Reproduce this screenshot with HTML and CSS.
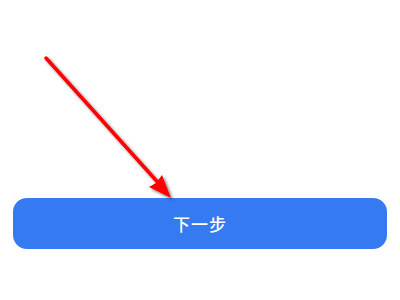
FILE: index.html
```html
<!DOCTYPE html>
<html lang="zh-CN">
<head>
  <meta charset="UTF-8"/>
  <meta name="viewport" content="width=device-width, initial-scale=1.0"/>
  <title>下一步</title>
  <link rel="stylesheet" href="styles.css">
</head>
<body>
  <main class="page">
    <div class="actions">
      <button class="next-btn">下一步</button>
    </div>
  </main>

  <!-- annotation arrow -->
  <svg class="hint-arrow" width="400" height="300" viewBox="0 0 400 300">
    <defs>
      <filter id="shadow" x="-20%" y="-20%" width="140%" height="140%">
        <feDropShadow dx="2" dy="2" stdDeviation="1.8" flood-color="#000" flood-opacity="0.5"/>
      </filter>
    </defs>
    <g filter="url(#shadow)">
      <line x1="46" y1="58" x2="162" y2="187" stroke="#ff0000" stroke-width="3.5" stroke-linecap="round"/>
      <polygon points="171,198 149,187 156,183 162,175" fill="#ff0000"/>
    </g>
  </svg>
</body>
</html>
```

FILE: styles.css
```css
*, *::before, *::after { margin:0; padding:0; box-sizing:border-box; }
body {
  font-family: "Noto Sans CJK SC", "Noto Sans", sans-serif;
  background: #fff;
  width: 400px;
  height: 300px;
  overflow: hidden;
}

.page {
  padding: 198px 13px 0;
}
.actions {
  display: flex;
}
.next-btn {
  flex: 1;
  height: 51px;
  background: #367af2;
  color: #fff;
  border: none;
  border-radius: 14px;
  font-family: inherit;
  font-size: 17px;
  font-weight: 500;
  letter-spacing: 1px;
  cursor: pointer;
}

.hint-arrow {
  position: absolute;
  left: 0;
  top: 0;
  pointer-events: none;
}
```
